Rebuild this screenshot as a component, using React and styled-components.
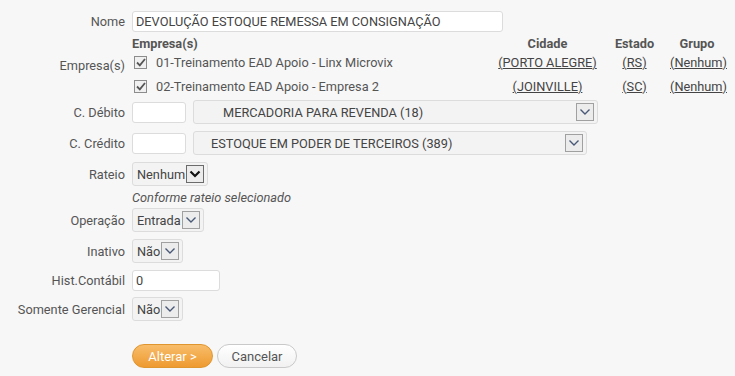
import React from "react";
import styled, { createGlobalStyle } from "styled-components";

const Global = createGlobalStyle`
  html, body { margin: 0; padding: 0; background: #f7f7f7; }
  body {
    font-family: Roboto, "Liberation Sans", Arial, sans-serif;
    font-size: 12.75px;
    color: #555;
  }
  * { box-sizing: border-box; }
`;

const Page = styled.div`
  width: 735px;
  height: 376px;
  padding-top: 11px;
  background: #f7f7f7;
`;

const Field = styled.div`
  display: flex;
  align-items: center;
  margin-top: ${(p) => p.$mt || 0}px;
  min-height: ${(p) => p.$h || 24}px;
`;

const Label = styled.div`
  width: 132px;
  flex: none;
  padding-right: 7px;
  text-align: right;
  color: #555;
  white-space: nowrap;
  line-height: 15px;
`;

const Controls = styled.div`
  display: flex;
  align-items: center;
  gap: ${(p) => p.$gap || 0}px;
`;

const TextBox = styled.div`
  width: ${(p) => p.$w}px;
  height: 21px;
  background: #fff;
  border: 1px solid #dcdcdc;
  border-radius: 3px;
  padding: 0 3px;
  display: flex;
  align-items: center;
  color: #444;
  white-space: nowrap;
  overflow: hidden;
`;

const SelectBox = styled.div`
  display: inline-flex;
  align-items: center;
  height: 24px;
  width: ${(p) => (p.$w ? `${p.$w}px` : "auto")};
  background: #f3f3f3;
  border: 1px solid #dcdcdc;
  border-radius: 3px;
  padding: 0 3px 0 ${(p) => p.$pl || 4}px;
  color: #444;
  white-space: nowrap;
`;

const SelectText = styled.span`
  flex: ${(p) => (p.$grow ? 1 : "none")};
`;

const ArrowBox = styled.span`
  flex: none;
  width: 18px;
  height: 18px;
  margin-left: 1px;
  display: flex;
  align-items: center;
  justify-content: center;
  background: #ececec;
  border: 1px solid ${(p) => (p.$active ? "#6b6b6b" : "#a0a0a0")};
  svg { display: block; }
`;

const Chevron = ({ active }) => (
  <ArrowBox $active={active}>
    <svg width="12" height="8" viewBox="0 0 12 8">
      <path
        d="M1.5 1.5 L6 6 L10.5 1.5"
        fill="none"
        stroke={active ? "#111" : "#4a5878"}
        strokeWidth={active ? 2.2 : 1.4}
      />
    </svg>
  </ArrowBox>
);

const Select = ({ w, pl, children, active }) => (
  <SelectBox $w={w} $pl={pl}>
    <SelectText $grow={!!w}>{children}</SelectText>
    <Chevron active={active} />
  </SelectBox>
);

const Table = styled.div`
  display: grid;
  grid-template-columns: 364px 103px 71px 54px;
  grid-template-rows: 15px 23.5px 23.5px;
  align-items: center;
  margin-top: 4px;
`;

const Head = styled.div`
  font-weight: bold;
  color: #555;
  text-align: ${(p) => p.$align || "center"};
  white-space: nowrap;
`;

const Cell = styled.div`
  text-align: center;
  white-space: nowrap;
`;

const NameCell = styled.div`
  display: flex;
  align-items: center;
  gap: 9px;
  padding-left: 2px;
  color: #555;
  white-space: nowrap;
`;

const Check = styled.span`
  width: 13px;
  height: 13px;
  flex: none;
  border: 1px solid #8c8c8c;
  background: #f0f0f0;
  display: flex;
  align-items: center;
  justify-content: center;
`;

const Link = styled.a`
  color: #444;
  text-decoration: underline;
`;

const Note = styled.div`
  margin-top: ${(p) => p.$mt || 0}px;
  margin-left: 132px;
  font-style: italic;
  color: #555;
  line-height: 15px;
`;

const ButtonBar = styled.div`
  display: flex;
  gap: 4px;
  margin-left: 132px;
  margin-top: ${(p) => p.$mt || 0}px;
`;

const Button = styled.button`
  height: 24px;
  width: ${(p) => p.$w}px;
  border-radius: 12px;
  font-family: inherit;
  font-size: 13px;
  padding: 0;
  cursor: pointer;
  color: ${(p) => (p.$primary ? "#fff" : "#555")};
  border: 1px solid ${(p) => (p.$primary ? "#e0962f" : "#c9c9c9")};
  background: ${(p) =>
    p.$primary
      ? "linear-gradient(#f8bd6a, #ee9a30)"
      : "linear-gradient(#ffffff, #f1f1f1)"};
`;

const CheckMark = () => (
  <Check>
    <svg width="10" height="9" viewBox="0 0 10 9">
      <path d="M1 4.5 L3.8 7.3 L9 1" fill="none" stroke="#555" strokeWidth="1.8" />
    </svg>
  </Check>
);

const empresas = [
  { nome: "01-Treinamento EAD Apoio - Linx Microvix", cidade: "PORTO ALEGRE", uf: "RS", grupo: "Nenhum" },
  { nome: "02-Treinamento EAD Apoio - Empresa 2", cidade: "JOINVILLE", uf: "SC", grupo: "Nenhum" },
];

export default function App() {
  return (
    <>
      <Global />
      <Page>
        <Field $h={21}>
          <Label>Nome</Label>
          <TextBox $w={371}>DEVOLUÇÃO ESTOQUE REMESSA EM CONSIGNAÇÃO</TextBox>
        </Field>

        <Field>
          <Label>Empresa(s)</Label>
          <Table>
            <Head $align="left">Empresa(s)</Head>
            <Head>Cidade</Head>
            <Head>Estado</Head>
            <Head>Grupo</Head>
            {empresas.map((e) => (
              <React.Fragment key={e.nome}>
                <NameCell>
                  <CheckMark />
                  {e.nome}
                </NameCell>
                <Cell><Link>({e.cidade})</Link></Cell>
                <Cell><Link>({e.uf})</Link></Cell>
                <Cell><Link>({e.grupo})</Link></Cell>
              </React.Fragment>
            ))}
          </Table>
        </Field>

        <Field $mt={2}>
          <Label>C. Débito</Label>
          <Controls $gap={7}>
            <TextBox $w={54} />
            <Select w={405} pl={29}>MERCADORIA PARA REVENDA (18)</Select>
          </Controls>
        </Field>

        <Field $mt={7}>
          <Label>C. Crédito</Label>
          <Controls $gap={7}>
            <TextBox $w={54} />
            <Select w={394} pl={17}>ESTOQUE EM PODER DE TERCEIROS (389)</Select>
          </Controls>
        </Field>

        <Field $mt={7}>
          <Label>Rateio</Label>
          <Select active>Nenhum</Select>
        </Field>

        <Note $mt={4}>Conforme rateio selecionado</Note>

        <Field $mt={3}>
          <Label>Operação</Label>
          <Select>Entrada</Select>
        </Field>

        <Field $mt={7}>
          <Label>Inativo</Label>
          <Select>Não</Select>
        </Field>

        <Field $mt={7} $h={21}>
          <Label>Hist.Contábil</Label>
          <TextBox $w={88}>0</TextBox>
        </Field>

        <Field $mt={6}>
          <Label>Somente Gerencial</Label>
          <Select>Não</Select>
        </Field>

        <ButtonBar $mt={23}>
          <Button $primary $w={81}>Alterar &gt;</Button>
          <Button $w={80}>Cancelar</Button>
        </ButtonBar>
      </Page>
    </>
  );
}
